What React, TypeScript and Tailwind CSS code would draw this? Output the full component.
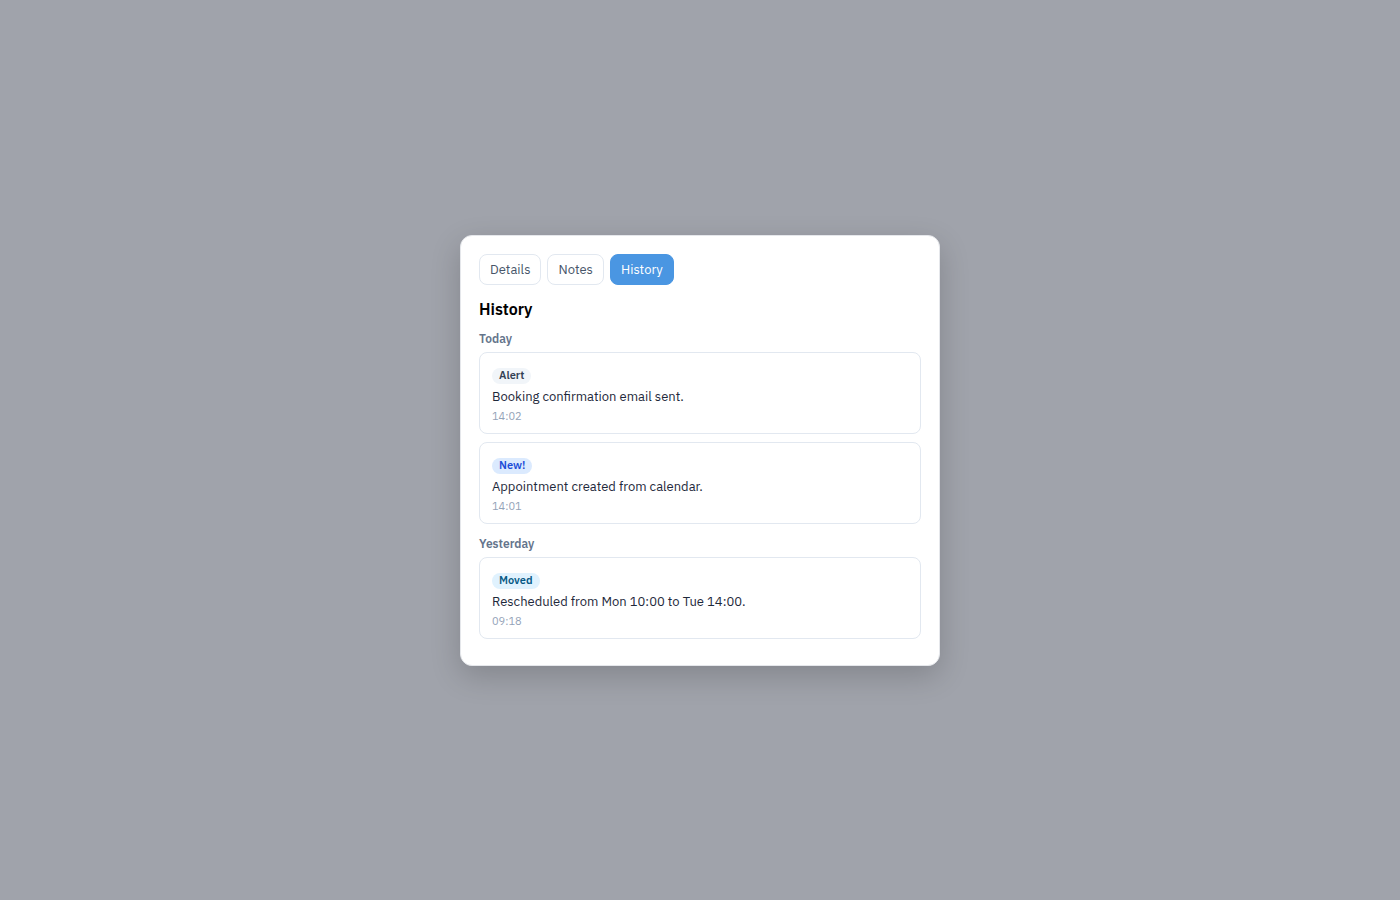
import React from "react";

const font = { fontFamily: '"IBM Plex Sans", Inter, "Noto Sans", sans-serif' };

function Badge({ label, tone }: { label: string; tone: "gray" | "blue" | "sky" }) {
  const cls =
    tone === "gray"
      ? "bg-[#f1f5f9] text-[#334155]"
      : tone === "blue"
      ? "bg-[#dbeafe] text-[#1d4ed8]"
      : "bg-[#e0f2fe] text-[#075985]";
  return (
    <span className={`inline-flex items-center h-[16px] px-[7px] rounded-full text-[11px] font-semibold leading-none ${cls}`}>
      {label}
    </span>
  );
}

function Item({ label, tone, text, time }: { label: string; tone: "gray" | "blue" | "sky"; text: string; time: string }) {
  return (
    <div className="border border-[#e2e8f0] rounded-[8px] px-[12px] pt-[15px] pb-[9px] flex flex-col items-start">
      <Badge label={label} tone={tone} />
      <div className="text-[13px] text-[#1e293b] leading-[18px] mt-[4px]">{text}</div>
      <div className="text-[11px] text-[#94a3b8] leading-[16px] mt-[2px]">{time}</div>
    </div>
  );
}

export default function App() {
  return (
    <div style={font} className="w-[1400px] h-[900px] bg-[#a0a3ab] flex items-center justify-center">
      <div className="w-[480px] bg-white rounded-[12px] border border-[#e5e7eb] shadow-[0_10px_30px_rgba(0,0,0,0.18)] px-[18px] pt-[18px] pb-[26px] flex flex-col">
        <div className="flex gap-[6px]">
          <button className="h-[31px] px-[10px] pt-[2px] rounded-[8px] border border-[#e2e8f0] text-[13px] text-[#475569] bg-white">Details</button>
          <button className="h-[31px] px-[10px] pt-[2px] rounded-[8px] border border-[#e2e8f0] text-[13px] text-[#475569] bg-white">Notes</button>
          <button className="h-[31px] px-[10px] pt-[2px] rounded-[8px] border border-[#4a96e2] text-[13px] text-white bg-[#4a96e2]">History</button>
        </div>
        <h2 className="text-[16px] font-semibold text-black mt-[14px] leading-[20px]">History</h2>
        <div className="text-[12px] font-semibold text-[#64748b] mt-[12px] leading-[16px]">Today</div>
        <div className="flex flex-col gap-[8px] mt-[5px]">
          <Item label="Alert" tone="gray" text="Booking confirmation email sent." time="14:02" />
          <Item label="New!" tone="blue" text="Appointment created from calendar." time="14:01" />
        </div>
        <div className="text-[12px] font-semibold text-[#64748b] mt-[12px] leading-[16px]">Yesterday</div>
        <div className="flex flex-col gap-[8px] mt-[5px]">
          <Item label="Moved" tone="sky" text="Rescheduled from Mon 10:00 to Tue 14:00." time="09:18" />
        </div>
      </div>
    </div>
  );
}
